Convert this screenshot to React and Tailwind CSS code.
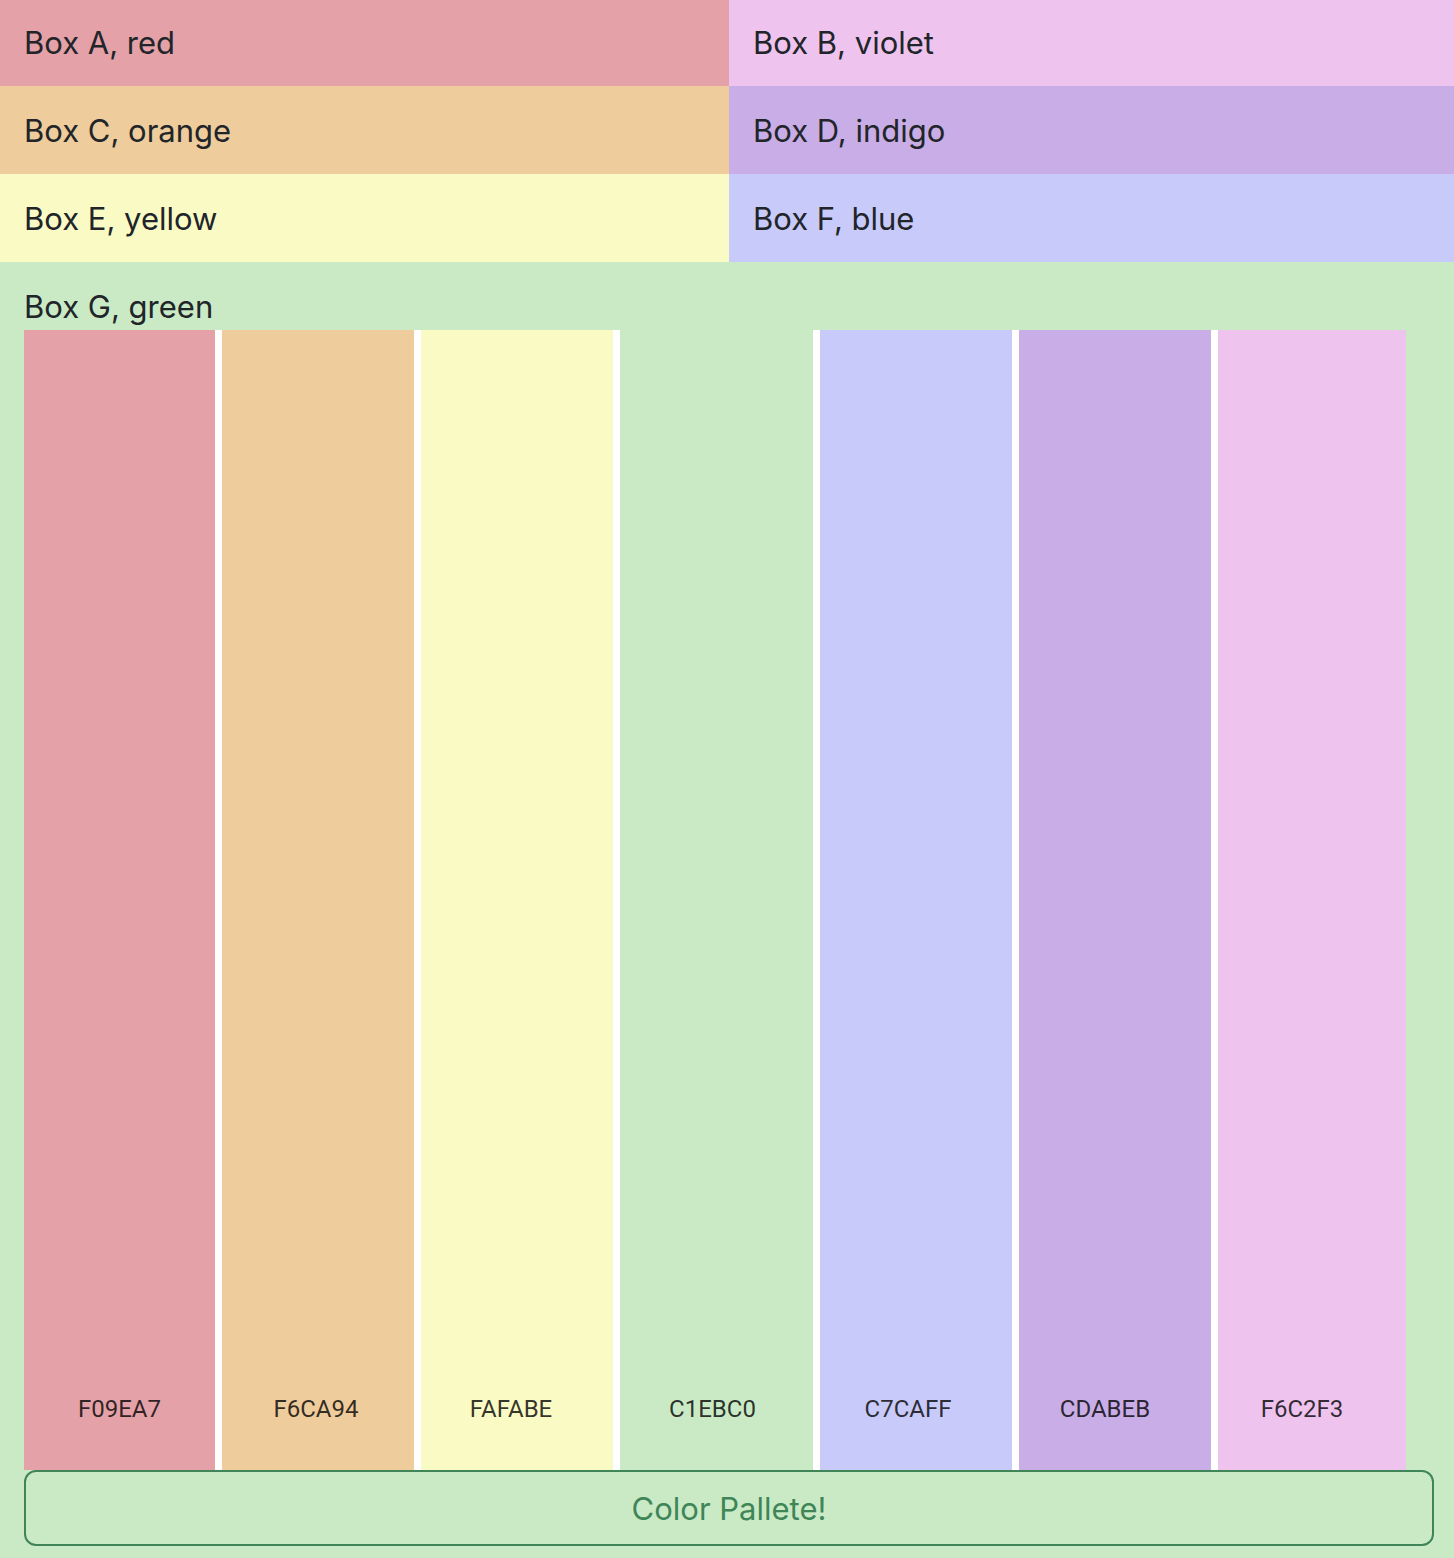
const boxes = [
  { label: 'Box A, red', style: 'bg-[#e4a1a8] pt-[19px] pb-[19px]' },
  { label: 'Box B, violet', style: 'bg-[#eec4ef] pt-[19px] pb-[19px]' },
  { label: 'Box C, orange', style: 'bg-[#eecc9c] pt-[21px] pb-[19px]' },
  { label: 'Box D, indigo', style: 'bg-[#c8ade6] pt-[21px] pb-[19px]' },
  { label: 'Box E, yellow', style: 'bg-[#fafac5] pt-[21px] pb-[19px]' },
  { label: 'Box F, blue', style: 'bg-[#c8cafa] pt-[21px] pb-[19px]' },
];

const swatches = [
  { code: 'F09EA7', style: 'bg-[#e4a1a8]' },
  { code: 'F6CA94', style: 'bg-[#eecc9c] pr-1' },
  { code: 'FAFABE', style: 'bg-[#fafac5] pr-3' },
  { code: 'C1EBC0', style: 'bg-[#caeac6] pr-2' },
  { code: 'C7CAFF', style: 'bg-[#c8cafa] pr-4' },
  { code: 'CDABEB', style: 'bg-[#c8ade6] pr-5' },
  { code: 'F6C2F3', style: 'bg-[#eec4ef] pr-5' },
];

export default function App() {
  return (
    <main className="min-h-screen bg-[#caeac6] font-['Inter',sans-serif] text-[31px] leading-[48px] text-[#212529]">
      <div className="grid grid-cols-[729fr_725fr]">
        {boxes.map((box) => (
          <div key={box.label} className={`px-6 ${box.style}`}>{box.label}</div>
        ))}
      </div>
      <section className="pt-[22px] pr-5 pb-3 pl-6">
        <p className="leading-[46px]">Box G, green</p>
        <div className="mr-7 grid h-[1140px] grid-cols-[191fr_192fr_192fr_193fr_192fr_192fr_188fr] gap-[7px] bg-white">
          {swatches.map((s) => (
            <div key={s.code} className={`flex items-end justify-center pb-[37px] font-['Roboto',sans-serif] text-2xl leading-[48px] text-black/80 ${s.style}`}>
              {s.code}
            </div>
          ))}
        </div>
        <button type="button" className="block w-full rounded-xl border-2 border-[#3f8558] pt-[13px] pb-[11px] text-[#3f8558]">
          Color Pallete!
        </button>
      </section>
    </main>
  );
}
